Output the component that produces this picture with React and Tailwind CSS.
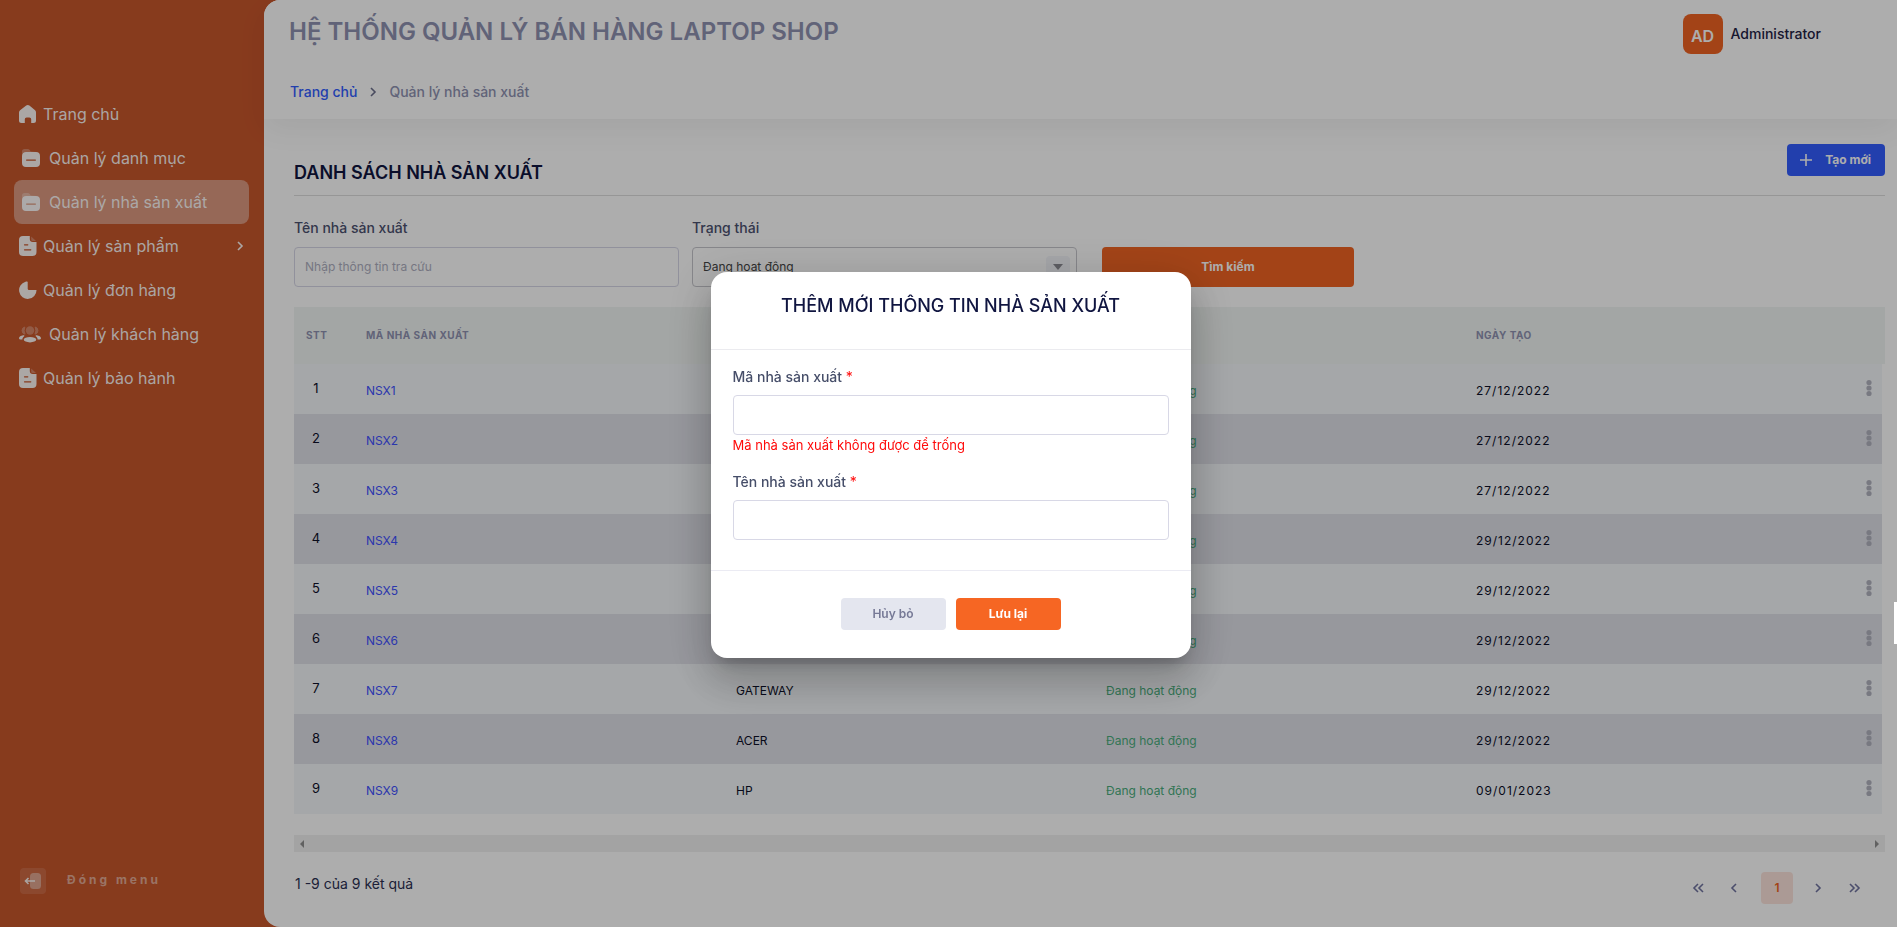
import React from "react";

const FOLDER = "folder";
const FILE = "file";

const NAV = [
  { label: "Trang chủ", icon: "home" },
  { label: "Quản lý danh mục", icon: FOLDER, wide: true },
  { label: "Quản lý nhà sản xuất", icon: FOLDER, wide: true, active: true },
  { label: "Quản lý sản phẩm", icon: FILE, more: true },
  { label: "Quản lý đơn hàng", icon: "pie" },
  { label: "Quản lý khách hàng", icon: "users", wide: true },
  { label: "Quản lý bảo hành", icon: FILE },
];

const ROWS = [
  ["NSX1", "", "27/12/2022"],
  ["NSX2", "", "27/12/2022"],
  ["NSX3", "", "27/12/2022"],
  ["NSX4", "", "29/12/2022"],
  ["NSX5", "", "29/12/2022"],
  ["NSX6", "", "29/12/2022"],
  ["NSX7", "GATEWAY", "29/12/2022"],
  ["NSX8", "ACER", "29/12/2022"],
  ["NSX9", "HP", "09/01/2023"],
];

function NavIcon({ name }) {
  if (name === "home")
    return (
      <svg className="h-5 w-[18px]" viewBox="0 0 18 20" fill="currentColor" aria-hidden="true">
        <path d="M7.2 1.500a2.600 2.600 0 0 1 3.200 0l5.700 4.700A3 3 0 0 1 17 8.400V16.500a2.500 2.500 0 0 1-2.500 2.500h-2.300v-3.700a1.800 1.800 0 0 0-1.800-1.800H7.600a1.800 1.800 0 0 0-1.800 1.800V19H2.500A2.500 2.500 0 0 1 0 16.500V8.400a3 3 0 0 1 1.100-2.200z" />
      </svg>
    );
  if (name === "folder")
    return (
      <svg className="h-5 w-5" viewBox="0 0 20 20" fill="currentColor" aria-hidden="true">
        <path opacity=".3" d="M1 6V3.500A2.500 2.500 0 0 1 3.500 1h3.200c.8 0 1.500.4 2 1l1 1.500h5.800L10 4H5Q2 4 1 6z" />
        <path fillRule="evenodd" d="M5 4h10a4 4 0 0 1 4 4v7a4 4 0 0 1-4 4H5a4 4 0 0 1-4-4V8a4 4 0 0 1 4-4zm.6 7.500a.6.600 0 0 0 0 1.200h8.800a.6.600 0 0 0 0-1.200z" />
      </svg>
    );
  if (name === "file")
    return (
      <svg className="h-[22px] w-[18px]" viewBox="0 0 18 22" fill="currentColor" aria-hidden="true">
        <path fillRule="evenodd" d="M4 1h6.800v3A3 3 0 0 0 13.800 7H17.500v10A4 4 0 0 1 13.500 21H4a4 4 0 0 1-4-4V5a4 4 0 0 1 4-4zm1.500 8.200a.6.600 0 0 0 0 1.200h3.300a.6.600 0 0 0 0-1.200zm0 5a.6.600 0 0 0 0 1.200h6.300a.6.600 0 0 0 0-1.200z" />
        <path opacity=".3" d="M12.200 1.500 17 6h-3.500a1.300 1.300 0 0 1-1.300-1.300z" />
      </svg>
    );
  if (name === "pie")
    return (
      <svg className="h-[18px] w-[18px]" viewBox="0 0 18 18" fill="currentColor" aria-hidden="true">
        <path d="M8.700 1V7.800a1.300 1.300 0 0 0 1.300 1.300H17.500A8.700 8.700 0 1 1 6.500.8c1.300-.5 2.200-.5 2.200.2z" />
      </svg>
    );
  return (
    <svg className="-ml-0.5 h-[18px] w-[22px]" viewBox="0 0 22 18" fill="currentColor" aria-hidden="true">
      <g opacity=".3">
        <circle cx="11" cy="5.500" r="4.200" />
        <path d="M5.800 2A9 9 0 0 0 6 9.200 3.700 3.700 0 0 1 5.800 2zM16.200 2a9 9 0 0 1-.2 7.200A3.700 3.700 0 0 0 16.200 2z" stroke="currentColor" strokeWidth="1" />
      </g>
      <ellipse cx="11" cy="14.700" rx="6.200" ry="2.700" />
      <path d="M4.200 10.200C1.800 10.500 0 11.800 0 13.200c0 .9.800 1.300 2 1.300h1.400c0-1.400.6-2.200 1.800-3.200.5-.6 0-1.200-1-1.100zM17.800 10.200c2.400.3 4.200 1.600 4.200 3 0 .9-.8 1.300-2 1.300h-1.400c0-1.400-.6-2.200-1.800-3.200-.5-.6 0-1.200 1-1.100z" />
    </svg>
  );
}

function Chevron({ left, double, className }) {
  const one = left ? "M6 1 2 5l4 4" : "M2 1l4 4-4 4";
  const two = left ? "M11 1 7 5l4 4" : "M7 1l4 4-4 4";
  return (
    <svg
      className={className}
      width={double ? 13 : 8}
      height="10"
      viewBox={double ? "0 0 13 10" : "0 0 8 10"}
      fill="none"
      stroke="currentColor"
      strokeWidth="1.600"
      aria-hidden="true"
    >
      <path d={one} />
      {double && <path d={two} />}
    </svg>
  );
}

function Sidebar() {
  return (
    <aside className="flex w-[264px] shrink-0 flex-col justify-between pt-[92px] pb-[33px]">
      <nav className="flex flex-col pr-[15px] pl-[14px]">
        {NAV.map((item) => (
          <a
            key={item.label}
            href="#"
            className={
              "flex h-11 items-center rounded-lg pr-[5px] pl-[5px] text-base text-white/95 " +
              (item.active ? "bg-white/40" : "")
            }
          >
            <span className={item.wide ? "flex w-[30px] pl-0.5" : "flex w-6"}>
              <NavIcon name={item.icon} />
            </span>
            <span className="grow">{item.label}</span>
            {item.more && <Chevron />}
          </a>
        ))}
      </nav>
      <button type="button" className="flex items-center gap-[21px] pl-5 text-left text-white/50">
        <span className="flex size-[26px] items-center justify-center rounded bg-white/12">
          <svg width="18" height="18" viewBox="0 0 18 18" aria-hidden="true">
            <rect x="6" y="1" width="11" height="16" rx="3.500" fill="#fff" opacity=".4" />
            <path d="M4.500 6 1.500 9l3 3M2 9h9" fill="none" stroke="#fff" strokeWidth="1.600" opacity=".9" />
          </svg>
        </span>
        <span className="pb-0.5 text-xs font-bold tracking-[3px]">Đóng menu</span>
      </button>
    </aside>
  );
}

function Header() {
  return (
    <header className="h-[119px] rounded-tl-2xl bg-white pl-[25px] shadow-[0_10px_30px_rgba(0,0,0,0.06)]">
      <div className="flex items-start justify-between pt-[14px] pr-[76px]">
        <h1 className="text-2xl leading-9 font-semibold text-[#8f92b2]">
          HỆ THỐNG QUẢN LÝ BÁN HÀNG LAPTOP SHOP
        </h1>
        <div className="flex items-center gap-2">
          <span className="flex size-10 items-center justify-center rounded-lg bg-[#f06423] pt-1 text-base font-semibold text-white">
            AD
          </span>
          <span className="text-sm font-medium text-[#1f2346]">Administrator</span>
        </div>
      </div>
      <nav className="flex items-center gap-3 pt-7 pl-px text-sm font-medium text-[#8f92b2]" aria-label="Breadcrumb">
        <a href="#" className="text-[#335eff]">Trang chủ</a>
        <Chevron className="text-[#6c6f8c]" />
        <span>Quản lý nhà sản xuất</span>
      </nav>
    </header>
  );
}

function Filters() {
  return (
    <form className="flex items-end pt-[22px]">
      <div className="mr-[13px] w-[385px]">
        <label htmlFor="q-name" className="block text-sm font-medium text-[#4c5170]">Tên nhà sản xuất</label>
        <input
          id="q-name"
          placeholder="Nhập thông tin tra cứu"
          className="mt-[9px] h-10 w-full rounded border border-[#d6d6e6] bg-white px-[10px] pb-0.5 text-xs placeholder:text-[#aeafbf]"
        />
      </div>
      <div className="mr-[25px] w-[385px]">
        <label htmlFor="q-status" className="block text-sm font-medium text-[#4c5170]">Trạng thái</label>
        <div className="relative mt-[9px]">
          <select
            id="q-status"
            className="h-10 w-full appearance-none rounded border border-[#c6c6cc] bg-white px-[10px] text-xs text-[#444]"
          >
            <option>Đang hoạt động</option>
          </select>
          <span className="pointer-events-none absolute top-[9px] right-[7px] flex h-[22px] w-6 items-center justify-center rounded bg-[#f3f4f9]">
            <svg width="10" height="6" viewBox="0 0 10 6" aria-hidden="true">
              <path d="M0 0h10L5 6z" fill="#8c8c94" />
            </svg>
          </span>
        </div>
      </div>
      <button type="button" className="h-10 w-[252px] rounded bg-[#f06423] text-xs font-bold text-white">
        Tìm kiếm
      </button>
    </form>
  );
}

function ManufacturerTable() {
  return (
    <table className="mt-5 w-full table-fixed border-collapse text-left">
      <colgroup>
        <col className="w-[62px]" />
        <col className="w-[370px]" />
        <col className="w-[370px]" />
        <col className="w-[370px]" />
        <col />
        <col className="w-10" />
        <col className="w-[3px]" />
      </colgroup>
      <thead>
        <tr className="h-[57px] bg-[#f1f5f3] text-[10px] tracking-wider text-[#8f92b2]">
          <th scope="col" className="pl-3 font-bold">STT</th>
          <th scope="col" className="pl-[10px] font-bold">MÃ NHÀ SẢN XUẤT</th>
          <th scope="col" className="pl-[10px] font-bold">TÊN NHÀ SẢN XUẤT</th>
          <th scope="col" className="pl-[10px] font-bold">TRẠNG THÁI</th>
          <th scope="col" colSpan="3" className="pl-[10px] font-bold">NGÀY TẠO</th>
        </tr>
      </thead>
      <tbody>
        {ROWS.map(([code, name, date], i) => (
          <tr
            key={code}
            className={
              "h-[50px] text-xs text-[#0c0f28] " +
              (i % 2 ? "[&>td:not(:last-child)]:bg-[#dfe0e8]" : "[&>td:not(:last-child)]:bg-[#f3f6f9]")
            }
          >
            <td className="pr-[18px] text-center text-[13px]">{i + 1}</td>
            <td className="pt-1 pl-[10px]"><a href="#" className="text-[#3f51ff]">{code}</a></td>
            <td className="pt-1 pl-[10px]">{name}</td>
            <td className="pt-1 pl-[10px] text-[#4aad7c]">Đang hoạt động</td>
            <td className="pt-1 pl-[10px] tracking-[1px]">{date}</td>
            <td>
              <button type="button" aria-label={"Thao tác " + code} className="ml-6 flex pb-0.5 text-[#b2b3bf]">
                <svg width="6" height="18" viewBox="0 0 6 18" fill="currentColor" aria-hidden="true">
                  <circle cx="3" cy="3.500" r="2.600" />
                  <circle cx="3" cy="9" r="2.600" />
                  <circle cx="3" cy="14.500" r="2.600" />
                </svg>
              </button>
            </td>
            <td />
          </tr>
        ))}
      </tbody>
    </table>
  );
}

function Footer() {
  const btn = "flex h-8 w-8 items-center justify-center";
  return (
    <>
      <div className="mt-[21px] flex h-[17px] items-center justify-between bg-[#f1f1f1] px-[6px] text-[#909090]">
        <svg width="4" height="8" viewBox="0 0 4 8" fill="currentColor" aria-hidden="true"><path d="M4 0v8L0 4z" /></svg>
        <svg width="4" height="8" viewBox="0 0 4 8" fill="currentColor" aria-hidden="true"><path d="M0 0v8l4-4z" /></svg>
      </div>
      <div className="flex items-start justify-between pt-5 pr-[15px] pb-5 text-[#2c3052]">
        <p className="pt-0.5 pl-px text-sm">1 -9 của 9 kết quả</p>
        <div className="flex items-center text-[#7074a0]">
          <button type="button" aria-label="Trang đầu" className={btn}><Chevron left double /></button>
          <button type="button" aria-label="Trang trước" className={btn + " ml-1 mr-[11px]"}><Chevron left /></button>
          <button type="button" className={btn + " rounded bg-[#fce4dc] text-xs font-semibold text-[#f06423]"}>1</button>
          <button type="button" aria-label="Trang sau" className={btn + " ml-[9px] mr-1"}><Chevron /></button>
          <button type="button" aria-label="Trang cuối" className={btn}><Chevron double /></button>
        </div>
      </div>
    </>
  );
}

function Field({ id, label, error }) {
  return (
    <div>
      <label htmlFor={id} className="block text-sm font-medium text-[#464e69]">
        {label} <span className="font-normal text-[#ff0a0a]">*</span>
      </label>
      <input id={id} className="mt-2 block h-10 w-full rounded border border-[#d8d8e6] bg-white px-3 text-sm" />
      {error && <p className="text-[13px] leading-5 text-[#ff0a0a]">{error}</p>}
    </div>
  );
}

function Dialog() {
  return (
    <div className="fixed inset-0 flex items-center justify-center bg-black/32 pt-0.5 pl-1">
      <form
        role="dialog"
        aria-modal="true"
        aria-labelledby="dialog-title"
        className="w-[480px] rounded-2xl bg-white shadow-[0_11px_15px_-7px_rgba(0,0,0,0.2),0_24px_38px_3px_rgba(0,0,0,0.14),0_9px_46px_8px_rgba(0,0,0,0.12)]"
      >
        <div className="h-[78px] border-b border-[#ebebef] pt-5 text-center">
          <h2 id="dialog-title" className="text-lg leading-7 font-medium text-[#101540]">
            THÊM MỚI THÔNG TIN NHÀ SẢN XUẤT
          </h2>
        </div>
        <div className="flex flex-col gap-[17px] px-[22px] pt-[17px] pb-[30px]">
          <Field id="code" label="Mã nhà sản xuất" error="Mã nhà sản xuất không được để trống" />
          <Field id="name" label="Tên nhà sản xuất" />
        </div>
        <div className="flex justify-center gap-[10px] border-t border-[#ebebf3] pt-[27px] pb-7 text-xs">
          <button type="button" className="h-8 w-[105px] rounded bg-[#e4e6ef] font-semibold text-[#767996]">Hủy bỏ</button>
          <button type="button" className="h-8 w-[105px] rounded bg-[#f66623] font-bold text-white">Lưu lại</button>
        </div>
      </form>
      <span className="absolute top-[602px] right-0 h-[42px] w-[3px] bg-white" />
    </div>
  );
}

export default function App() {
  return (
    <div className="flex min-h-screen bg-[#c8572c] font-['Inter','Noto_Sans',sans-serif]">
      <Sidebar />
      <main className="min-w-0 grow rounded-l-2xl bg-white">
        <Header />
        <section className="pt-[25px] pr-3 pl-[30px]">
          <div className="flex h-[52px] items-start justify-between border-b border-[#dedede]">
            <h2 className="pt-[15px] text-lg leading-7 font-semibold text-[#101540]">DANH SÁCH NHÀ SẢN XUẤT</h2>
            <button
              type="button"
              className="flex h-8 items-center gap-[13px] rounded bg-[#335eff] pr-[14px] pl-[13px] text-xs font-bold text-white"
            >
              <svg width="12" height="12" viewBox="0 0 12 12" stroke="currentColor" strokeWidth="1.600" aria-hidden="true">
                <path d="M6 0v12M0 6h12" />
              </svg>
              Tạo mới
            </button>
          </div>
          <Filters />
          <ManufacturerTable />
          <Footer />
        </section>
      </main>
      <Dialog />
    </div>
  );
}
